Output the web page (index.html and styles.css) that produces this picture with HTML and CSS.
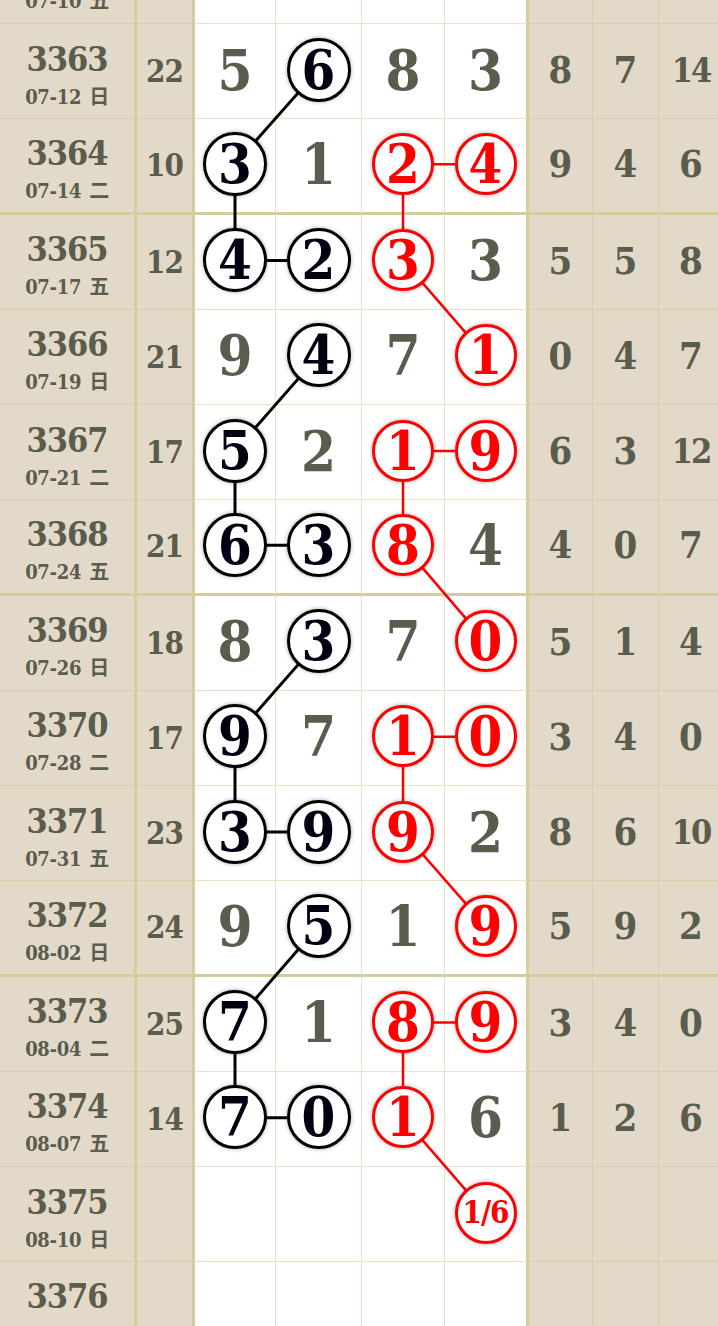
FILE: index.html
```html
<!DOCTYPE html>
<html lang="zh">
<head>
    <meta charset="UTF-8">
    <meta name="viewport" content="width=device-width, initial-scale=1.0">
    <title>走势图</title>
    <link rel="stylesheet" href="styles.css">
</head>
<body>
    <div class="chart" id="chart">
        <svg class="lines" id="lines"></svg>

        <div class="row">
            <div class="cell issue"><b>3362</b><span>07-10 五</span></div>
            <div class="cell sum">15</div>
            <div class="cell d">2</div><div class="cell d">0</div><div class="cell d">7</div><div class="cell d d4">6</div>
            <div class="cell t">3</div><div class="cell t">8</div><div class="cell t">5</div>
        </div>

        <div class="row">
            <div class="cell issue"><b>3363</b><span>07-12 日</span></div>
            <div class="cell sum">22</div>
            <div class="cell d">5</div>
            <div class="cell d"><i class="ball k" data-chain="k1" data-step="1">6</i></div>
            <div class="cell d">8</div>
            <div class="cell d d4">3</div>
            <div class="cell t">8</div><div class="cell t">7</div><div class="cell t two">14</div>
        </div>

        <div class="row end">
            <div class="cell issue"><b>3364</b><span>07-14 二</span></div>
            <div class="cell sum">10</div>
            <div class="cell d"><i class="ball k" data-chain="k1" data-step="2">3</i></div>
            <div class="cell d">1</div>
            <div class="cell d"><i class="ball r" data-chain="r1" data-step="2">2</i></div>
            <div class="cell d d4"><i class="ball r" data-chain="r1" data-step="1">4</i></div>
            <div class="cell t">9</div><div class="cell t">4</div><div class="cell t">6</div>
        </div>

        <div class="row">
            <div class="cell issue"><b>3365</b><span>07-17 五</span></div>
            <div class="cell sum">12</div>
            <div class="cell d"><i class="ball k" data-chain="k1" data-step="3">4</i></div>
            <div class="cell d"><i class="ball k" data-chain="k1" data-step="4">2</i></div>
            <div class="cell d"><i class="ball r" data-chain="r1" data-step="3">3</i></div>
            <div class="cell d d4">3</div>
            <div class="cell t">5</div><div class="cell t">5</div><div class="cell t">8</div>
        </div>

        <div class="row">
            <div class="cell issue"><b>3366</b><span>07-19 日</span></div>
            <div class="cell sum">21</div>
            <div class="cell d">9</div>
            <div class="cell d"><i class="ball k" data-chain="k2" data-step="1">4</i></div>
            <div class="cell d">7</div>
            <div class="cell d d4"><i class="ball r" data-chain="r1" data-step="4">1</i></div>
            <div class="cell t">0</div><div class="cell t">4</div><div class="cell t">7</div>
        </div>

        <div class="row">
            <div class="cell issue"><b>3367</b><span>07-21 二</span></div>
            <div class="cell sum">17</div>
            <div class="cell d"><i class="ball k" data-chain="k2" data-step="2">5</i></div>
            <div class="cell d">2</div>
            <div class="cell d"><i class="ball r" data-chain="r2" data-step="2">1</i></div>
            <div class="cell d d4"><i class="ball r" data-chain="r2" data-step="1">9</i></div>
            <div class="cell t">6</div><div class="cell t">3</div><div class="cell t two">12</div>
        </div>

        <div class="row end">
            <div class="cell issue"><b>3368</b><span>07-24 五</span></div>
            <div class="cell sum">21</div>
            <div class="cell d"><i class="ball k" data-chain="k2" data-step="3">6</i></div>
            <div class="cell d"><i class="ball k" data-chain="k2" data-step="4">3</i></div>
            <div class="cell d"><i class="ball r" data-chain="r2" data-step="3">8</i></div>
            <div class="cell d d4">4</div>
            <div class="cell t">4</div><div class="cell t">0</div><div class="cell t">7</div>
        </div>

        <div class="row">
            <div class="cell issue"><b>3369</b><span>07-26 日</span></div>
            <div class="cell sum">18</div>
            <div class="cell d">8</div>
            <div class="cell d"><i class="ball k" data-chain="k3" data-step="1">3</i></div>
            <div class="cell d">7</div>
            <div class="cell d d4"><i class="ball r" data-chain="r2" data-step="4">0</i></div>
            <div class="cell t">5</div><div class="cell t">1</div><div class="cell t">4</div>
        </div>

        <div class="row">
            <div class="cell issue"><b>3370</b><span>07-28 二</span></div>
            <div class="cell sum">17</div>
            <div class="cell d"><i class="ball k" data-chain="k3" data-step="2">9</i></div>
            <div class="cell d">7</div>
            <div class="cell d"><i class="ball r" data-chain="r3" data-step="2">1</i></div>
            <div class="cell d d4"><i class="ball r" data-chain="r3" data-step="1">0</i></div>
            <div class="cell t">3</div><div class="cell t">4</div><div class="cell t">0</div>
        </div>

        <div class="row">
            <div class="cell issue"><b>3371</b><span>07-31 五</span></div>
            <div class="cell sum">23</div>
            <div class="cell d"><i class="ball k" data-chain="k3" data-step="3">3</i></div>
            <div class="cell d"><i class="ball k" data-chain="k3" data-step="4">9</i></div>
            <div class="cell d"><i class="ball r" data-chain="r3" data-step="3">9</i></div>
            <div class="cell d d4">2</div>
            <div class="cell t">8</div><div class="cell t">6</div><div class="cell t two">10</div>
        </div>

        <div class="row end">
            <div class="cell issue"><b>3372</b><span>08-02 日</span></div>
            <div class="cell sum">24</div>
            <div class="cell d">9</div>
            <div class="cell d"><i class="ball k" data-chain="k4" data-step="1">5</i></div>
            <div class="cell d">1</div>
            <div class="cell d d4"><i class="ball r" data-chain="r3" data-step="4">9</i></div>
            <div class="cell t">5</div><div class="cell t">9</div><div class="cell t">2</div>
        </div>

        <div class="row">
            <div class="cell issue"><b>3373</b><span>08-04 二</span></div>
            <div class="cell sum">25</div>
            <div class="cell d"><i class="ball k" data-chain="k4" data-step="2">7</i></div>
            <div class="cell d">1</div>
            <div class="cell d"><i class="ball r" data-chain="r4" data-step="2">8</i></div>
            <div class="cell d d4"><i class="ball r" data-chain="r4" data-step="1">9</i></div>
            <div class="cell t">3</div><div class="cell t">4</div><div class="cell t">0</div>
        </div>

        <div class="row">
            <div class="cell issue"><b>3374</b><span>08-07 五</span></div>
            <div class="cell sum">14</div>
            <div class="cell d"><i class="ball k" data-chain="k4" data-step="3">7</i></div>
            <div class="cell d"><i class="ball k" data-chain="k4" data-step="4">0</i></div>
            <div class="cell d"><i class="ball r" data-chain="r4" data-step="3">1</i></div>
            <div class="cell d d4">6</div>
            <div class="cell t">1</div><div class="cell t">2</div><div class="cell t">6</div>
        </div>

        <div class="row">
            <div class="cell issue"><b>3375</b><span>08-10 日</span></div>
            <div class="cell sum"></div>
            <div class="cell d"></div><div class="cell d"></div><div class="cell d"></div>
            <div class="cell d d4"><i class="ball r small" data-chain="r4" data-step="4">1/6</i></div>
            <div class="cell t"></div><div class="cell t"></div><div class="cell t"></div>
        </div>

        <div class="row end">
            <div class="cell issue"><b>3376</b><span>08-12 二</span></div>
            <div class="cell sum"></div>
            <div class="cell d"></div><div class="cell d"></div><div class="cell d"></div><div class="cell d d4"></div>
            <div class="cell t"></div><div class="cell t"></div><div class="cell t"></div>
        </div>
    </div>

    <script>
        // une les boules de chaque chaîne, dans l'ordre des étapes
        function drawLines() {
            let chart = document.getElementById('chart');
            let svg = document.getElementById('lines');
            let box = chart.getBoundingClientRect();
            svg.setAttribute('width', box.width);
            svg.setAttribute('height', box.height);
            svg.innerHTML = '';

            let chains = {};
            document.querySelectorAll('.ball[data-chain]').forEach(ball => {
                let id = ball.dataset.chain;
                if (!chains[id]) chains[id] = [];
                chains[id].push(ball);
            });

            Object.keys(chains).forEach(id => {
                let balls = chains[id].sort((a, b) => a.dataset.step - b.dataset.step);
                let color = id[0] === 'r' ? '#ff0000' : '#000000';
                let width = id[0] === 'r' ? 2.5 : 3;
                for (let i = 1; i < balls.length; i++) {
                    let a = balls[i - 1].getBoundingClientRect();
                    let b = balls[i].getBoundingClientRect();
                    let line = document.createElementNS('http://www.w3.org/2000/svg', 'line');
                    line.setAttribute('x1', a.left + a.width / 2 - box.left);
                    line.setAttribute('y1', a.top + a.height / 2 - box.top);
                    line.setAttribute('x2', b.left + b.width / 2 - box.left);
                    line.setAttribute('y2', b.top + b.height / 2 - box.top);
                    line.setAttribute('stroke', color);
                    line.setAttribute('stroke-width', width);
                    svg.appendChild(line);
                }
            });
        }

        drawLines();
    </script>
</body>
</html>
```

FILE: styles.css
```css
body {
    margin: 0;
    overflow: hidden;
    background: #fff;
    font-family: "DejaVu Serif Condensed", "DejaVu Serif", "Noto Sans CJK SC", serif;
    font-weight: bold;
    color: #5a5c4e;
}
.chart {
    position: relative;
    width: 724px;
    margin-top: -71.25px;
}
.lines {
    position: absolute;
    left: 0;
    top: 0;
    z-index: 1;
    pointer-events: none;
}
.row {
    display: grid;
    grid-template-columns: 137px 58px 81px 86px 83px 84px 64px 66px 65px;
    height: 95.25px;
}
.cell {
    box-sizing: border-box;
    display: flex;
    align-items: center;
    justify-content: center;
    background: #fff;
    border-right: 1px solid #e9e3c6;
    border-bottom: 1px solid #e9e3c6;
}
.issue, .sum, .t {
    background: #e2d9c8;
    border-right-color: #d8cea9;
    border-bottom-color: #d8cea9;
}
.issue, .sum, .d4 {
    border-right: 3px solid #d6cc9e;
}
.end .cell {
    border-bottom: 3px solid #d6cc9e;
}

/* colonne des numéros */
.issue {
    flex-direction: column;
    gap: 11px;
    padding-top: 6px;
}
.issue b {
    font-size: 34px;
    line-height: 34px;
    letter-spacing: -1px;
}
.issue span {
    font-size: 20px;
    line-height: 20px;
    letter-spacing: -0.3px;
    word-spacing: 2px;
}
.sum {
    font-size: 31px;
    letter-spacing: -1px;
}
.d {
    font-size: 56px;
    line-height: 1;
    padding-bottom: 3px;
}
.t {
    font-size: 38px;
    padding-bottom: 3px;
}
.t.two {
    font-size: 34px;
    letter-spacing: -2px;
}

/* boules */
.ball {
    position: relative;
    z-index: 2;
    box-sizing: border-box;
    width: 64px;
    height: 64px;
    border: 3px solid #000;
    border-radius: 50%;
    background: #fff;
    display: flex;
    align-items: center;
    justify-content: center;
    font-style: normal;
    font-size: 54px;
    line-height: 1;
    color: #000010;
    box-shadow: 0 0 4px rgba(0, 0, 0, 0.35);
}
.ball.r {
    width: 62px;
    height: 62px;
    border-color: #ff0000;
    color: #ff0000;
}
.ball.small {
    font-size: 31px;
    letter-spacing: -1px;
}
```
